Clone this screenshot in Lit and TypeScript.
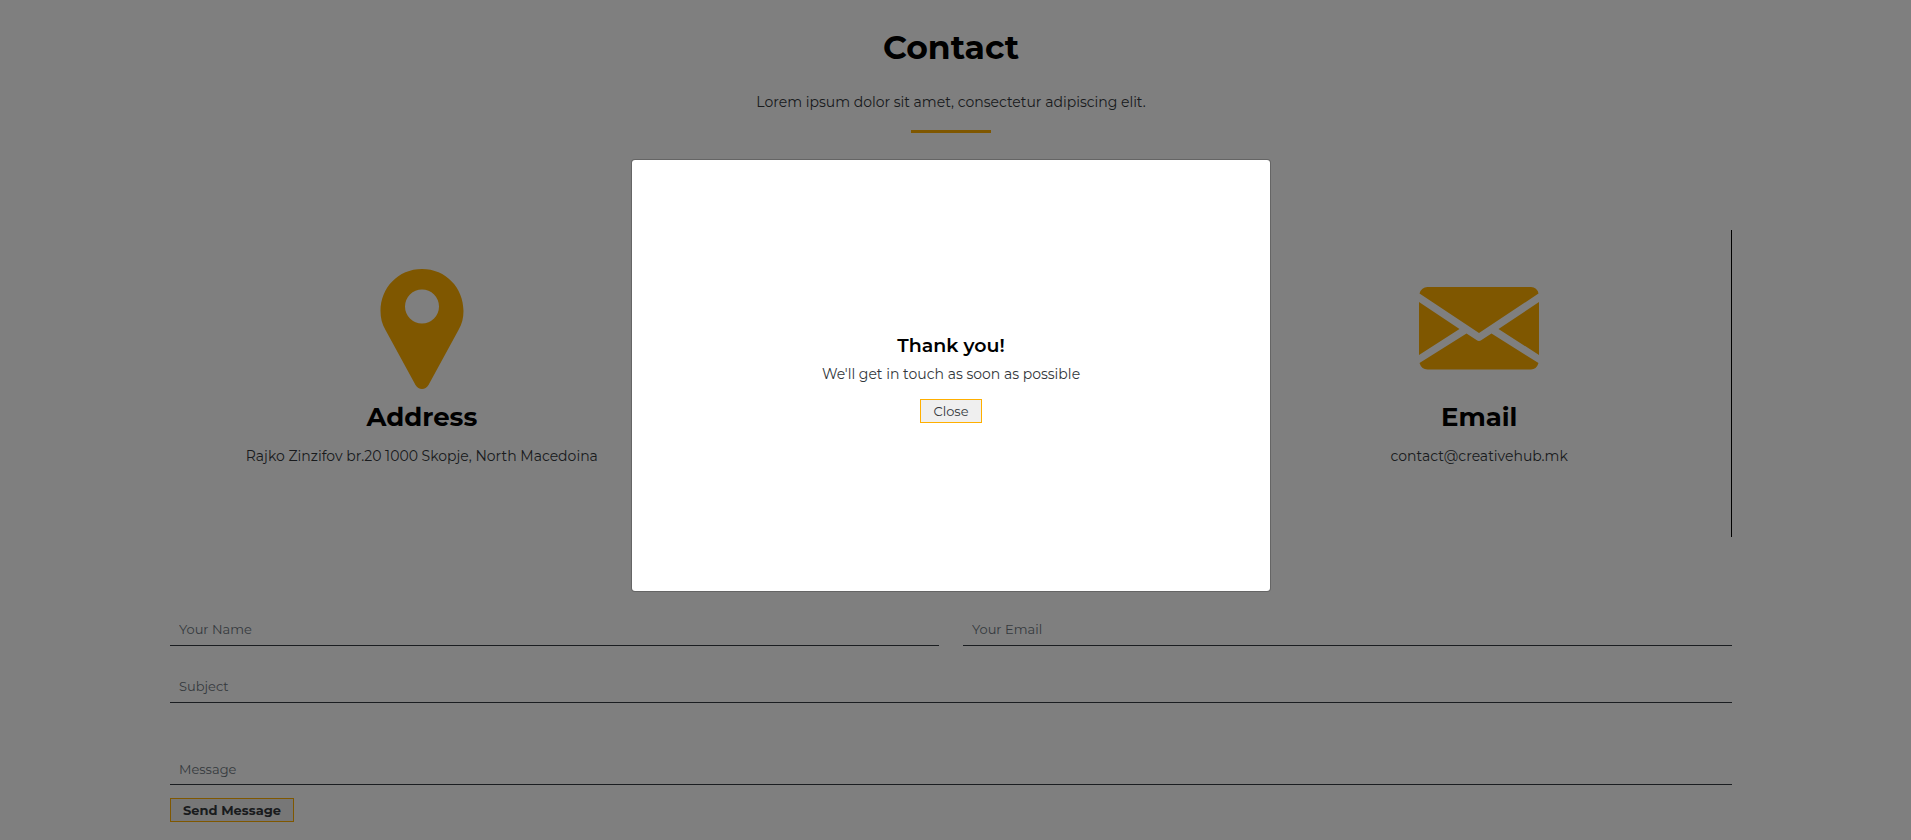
import { LitElement, html, css } from 'lit';
import { customElement } from 'lit/decorators.js';

@customElement('app-root')
export class AppRoot extends LitElement {
  static styles = css`
    :host {
      display: block;
      position: relative;
      min-height: 100vh;
      box-sizing: border-box;
      padding-right: 9px;
      overflow: hidden;
      background: #fff;
      color: #33373b;
      font: 400 14px/24px Montserrat, Inter, 'Open Sans', sans-serif;
    }
    *, *::before, *::after { box-sizing: border-box; }
    h1, h2, h3, p { margin: 0; }
    .page {
      width: calc(100% * 10 / 12 - 23px);
      margin: 0 auto;
      padding: 24px 0 18px;
    }
    .head { display: flex; flex-direction: column; align-items: center; text-align: center; }
    .title { color: #000; font-size: 33px; line-height: 46px; font-weight: 700; }
    .lead { margin-top: 20px; }
    .rule { width: 80px; height: 3px; margin-top: 16px; background: #ffaf00; }
    .cards { display: grid; grid-template-columns: repeat(3, 1fr); gap: 24px; margin-top: 97px; }
    .card {
      display: flex; flex-direction: column; align-items: center;
      height: 307px; padding-top: 39px;
      border-right: 1px solid #000; text-align: center;
    }
    .icon { width: 120px; height: 120px; fill: #ffaf00; }
    .name { margin-top: 10px; color: #000; font-size: 26px; line-height: 36px; font-weight: 700; }
    .text { margin-top: 9px; }
    .form { display: grid; grid-template-columns: 1fr 1fr; margin-top: 76px; column-gap: 24px; row-gap: 24px; }
    .wide { grid-column: 1 / -1; }
    .field {
      display: block; width: 100%; height: 33px; padding: 4px 9px; resize: none;
      border: 0; border-bottom: 1px solid #343a40; border-radius: 0; background: transparent; outline: 0;
      font: inherit; font-size: 13px; line-height: 24px; color: #212529;
    }
    .field::placeholder { color: #6c757d; opacity: 1; }
    .message { margin-top: 25px; padding-top: 5px; }
    .btn {
      height: 24px; padding: 0 12px; border: 1px solid #ffaf00; background: #efefef;
      color: #33373b; font: inherit; font-size: 13px; line-height: 20px;
    }
    .send { margin-top: 13px; font-weight: 700; }
    .backdrop {
      position: absolute; inset: 0; display: flex; justify-content: center; align-items: flex-start;
      padding: 159px 9px 0 0; background: rgba(0, 0, 0, 0.5);
    }
    .modal {
      display: flex; flex-direction: column; align-items: center; justify-content: center;
      width: 640px; height: 433px; padding-top: 5px; border: 1px solid rgba(0, 0, 0, 0.2); border-radius: 4px;
      background: #fff; background-clip: padding-box; text-align: center;
    }
    .thanks { color: #000; font-size: 19px; line-height: 24px; font-weight: 600; }
    .note { margin-top: 4px; }
    .close { margin-top: 13px; }
  `;

  render() {
    return html`
      <main class="page">
        <header class="head">
          <h1 class="title">Contact</h1>
          <p class="lead">Lorem ipsum dolor sit amet, consectetur adipiscing elit.</p>
          <div class="rule"></div>
        </header>
        <section class="cards">
          <article class="card">
            <svg class="icon" viewBox="0 0 120 120" aria-hidden="true">
              <path fill-rule="evenodd" d="M60 0C36 0 18.500 19 18.500 42C18.500 49 20 55 23.500 61L53.500 116Q56 120 60 120Q64 120 66.500 116L96.500 61C100 55 101.500 49 101.500 42C101.500 19 84 0 60 0ZM60 20.500A17 17 0 1 1 60 54.500A17 17 0 1 1 60 20.500Z"/>
            </svg>
            <h2 class="name">Address</h2>
            <p class="text">Rajko Zinzifov br.20 1000 Skopje, North Macedoina</p>
          </article>
          <article class="card"></article>
          <article class="card">
            <svg class="icon" viewBox="0 0 120 120" aria-hidden="true">
              <path d="M.5 24.500Q2.500 18 8.500 18H112Q118 18 119.500 24.500L60 64ZM0 33L40.500 60L0 86ZM120 33L79.500 60L120 86ZM.5 94L47.500 64.500L57.500 71Q60 73 62.500 71L72.500 64.500L119.500 94Q117.500 100.500 112 100.500H8.500Q2.500 100.500 .5 94Z"/>
            </svg>
            <h2 class="name">Email</h2>
            <p class="text">contact@creativehub.mk</p>
          </article>
        </section>
        <form class="form" id="contact" @submit=${(e: Event) => e.preventDefault()}>
          <input class="field" type="text" placeholder="Your Name" aria-label="Your Name" />
          <input class="field" type="email" placeholder="Your Email" aria-label="Your Email" />
          <input class="field wide" type="text" placeholder="Subject" aria-label="Subject" />
          <textarea class="field wide message" rows="1" placeholder="Message" aria-label="Message"></textarea>
        </form>
        <button class="btn send" type="submit" form="contact">Send Message</button>
      </main>
      <div class="backdrop">
        <div class="modal" role="dialog" aria-modal="true" aria-labelledby="thanks">
          <h3 class="thanks" id="thanks">Thank you!</h3>
          <p class="note">We'll get in touch as soon as possible</p>
          <button class="btn close" type="button">Close</button>
        </div>
      </div>
    `;
  }
}
